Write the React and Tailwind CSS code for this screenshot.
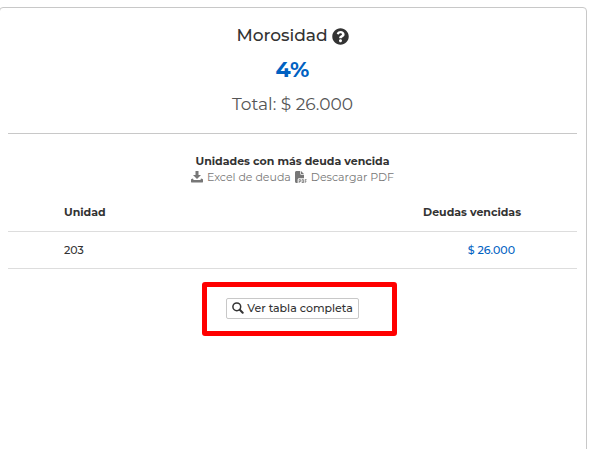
import { FaQuestionCircle } from "react-icons/fa";
import { FaFilePdf } from "react-icons/fa6";

const units = [{ unit: "203", debt: "$ 26.000" }];

function DownloadIcon() {
  return (
    <svg width="12" height="12" viewBox="0 0 12 12" fill="currentColor" aria-hidden="true">
      <path d="M4.5 0h3v4H10L6 8 2 4h2.5z" />
      <path d="M0 8.7c0-.3.2-.5.4-.6l1.6-.7.6 1.6h6.8l.6-1.6 1.6.7c.2.1.4.3.4.6V11c0 .3-.2.5-.5.5H.5C.2 11.500 0 11.300 0 11z" />
    </svg>
  );
}

function SearchIcon() {
  return (
    <svg width="12" height="12" viewBox="0 0 12 12" fill="none" stroke="currentColor" aria-hidden="true">
      <circle cx="4.800" cy="4.800" r="3.900" strokeWidth="1.500" />
      <path d="M7.800 7.800L10.700 10.700" strokeWidth="2" strokeLinecap="round" />
    </svg>
  );
}

function Summary() {
  return (
    <div className="flex flex-col items-center border-b border-[#c8c8c8] pt-3 pb-3 text-center">
      <h2 className="flex h-8 items-center gap-1 text-[17px] font-medium text-[#333333]">
        Morosidad
        <FaQuestionCircle size={17} />
      </h2>
      <p className="text-[22px] leading-9 font-bold text-[#0061c2]">4%</p>
      <p className="text-[17px] leading-[33px] text-[#555555]">Total: $ 26.000</p>
    </div>
  );
}

function Downloads() {
  return (
    <div className="flex items-center justify-center gap-1 text-[11px] leading-4 text-[#777777]">
      <a href="#" className="flex items-center gap-1">
        <DownloadIcon />
        Excel de deuda
      </a>
      <a href="#" className="flex items-center gap-1">
        <FaFilePdf size={12} />
        Descargar PDF
      </a>
    </div>
  );
}

function DebtTable() {
  return (
    <table className="mt-2 w-full text-[11px] text-[#333333]">
      <thead>
        <tr className="h-[38px] border-b border-[#dddddd]">
          <th className="pl-14 text-left font-bold">Unidad</th>
          <th className="pr-14 text-right font-bold">Deudas vencidas</th>
        </tr>
      </thead>
      <tbody>
        {units.map(({ unit, debt }) => (
          <tr key={unit} className="h-[37px] border-b border-[#dddddd] font-medium">
            <td className="pt-px pl-14">{unit}</td>
            <td className="pt-px pr-[62px] text-right text-[#0061c2]">{debt}</td>
          </tr>
        ))}
      </tbody>
    </table>
  );
}

export default function App() {
  return (
    <div className="h-screen overflow-hidden bg-white pt-[7px] pr-[3px] font-['Montserrat','Inter',sans-serif]">
      <section className="-ml-px min-h-screen rounded-[4px] border border-[#c8c8c8] pr-[9px] pl-2">
        <Summary />
        <h3 className="mt-[19px] text-center text-[11px] leading-4 font-bold text-[#333333]">
          Unidades con más deuda vencida
        </h3>
        <Downloads />
        <DebtTable />
        <div className="mt-[29px] flex justify-center">
          <div className="relative">
            <button
              type="button"
              className="flex h-[21px] items-center gap-[3px] rounded-[2px] border border-[#c8c8c8] bg-white px-[5px] text-[11px] font-medium text-[#333333]"
            >
              <SearchIcon />
              Ver tabla completa
            </button>
            {/* highlight frame around the button */}
            <div className="pointer-events-none absolute -top-4 -right-[38px] -bottom-[17px] -left-6 rounded-[3px] border-5 border-[#ff0000]" />
          </div>
        </div>
      </section>
    </div>
  );
}
